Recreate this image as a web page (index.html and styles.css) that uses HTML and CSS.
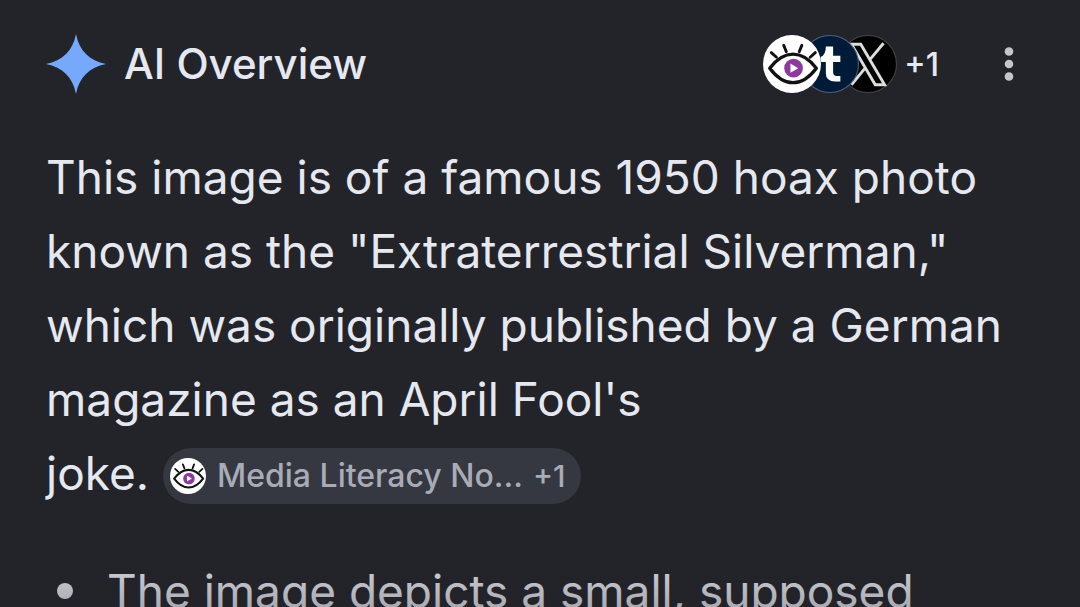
FILE: index.html
```html
<!DOCTYPE html>
<html lang="en">
<head>
<meta charset="utf-8">
<meta name="viewport" content="width=device-width, initial-scale=1">
<title>AI Overview</title>
<link rel="stylesheet" href="styles.css">
</head>
<body>
<svg class="defs" aria-hidden="true">
  <symbol id="eye" viewBox="0 0 56 56">
    <circle cx="28" cy="28" r="28" fill="#fff"/>
    <path d="M6.500 32Q17 18.500 29 18.500T51.500 32Q41 46 29 46T6.500 32Z" fill="#fff" stroke="#111" stroke-width="3.200" stroke-linejoin="round"/>
    <path d="M8 17l5 4.500M20 10l2.500 6M37.500 10l-2.500 6M50.500 17l-5 4.500" stroke="#111" stroke-width="2.800" stroke-linecap="round"/>
    <circle cx="29.500" cy="32" r="9" fill="#8e3a9d"/>
    <path d="M26.500 27.500v9l7.500-4.500z" fill="#fff"/>
  </symbol>
</svg>
<main class="overview">
  <header class="header">
    <svg class="spark" viewBox="0 0 58 58" aria-hidden="true"><path d="M29 0C32 16 42 26 58 29C42 32 32 42 29 58C26 42 16 32 0 29C16 26 26 16 29 0Z" fill="#76a9fb"/></svg>
    <h1 class="title">AI Overview</h1>
    <button class="sources" aria-label="Sources">
      <svg class="source source-eye" viewBox="0 0 56 56" aria-hidden="true"><use href="#eye"/></svg>
      <svg class="source source-t" viewBox="0 0 56 56" aria-hidden="true">
        <circle cx="28" cy="28" r="27.500" fill="#001b38" stroke="#4c6482"/>
        <path d="M24 11h7v9h7v6h-7v10q0 3.500 3.500 3.500H38v5.500h-5q-9 0-9-8V26h-5v-5q5-1.500 5-10Z" fill="#fff"/>
      </svg>
      <svg class="source source-x" viewBox="0 0 56 56" aria-hidden="true">
        <circle cx="28" cy="28" r="27.500" fill="#000" stroke="#44464c"/>
        <path d="M12 9h9l23 39h-9ZM43 8L30 23.500M26 31L12 48" fill="none" stroke="#ddd" stroke-width="2.800"/>
      </svg>
      <span class="more">+1</span>
    </button>
    <button class="menu" aria-label="More options"><svg class="dots" viewBox="0 0 10 36" aria-hidden="true"><circle cx="5" cy="5.500" r="4.300"/><circle cx="5" cy="18" r="4.300"/><circle cx="5" cy="30.500" r="4.300"/></svg></button>
  </header>
  <p class="text">This image is of a famous 1950 hoax photo<br>known as the "Extraterrestrial Silverman,"<br>which was originally published by a German<br>magazine as an April Fool's<br><span class="last">joke. <a class="chip" href="#source"><svg class="chip-icon" viewBox="0 0 56 56" aria-hidden="true"><use href="#eye"/></svg><span>Media Literacy No...</span><span class="chip-more">+1</span></a></span></p>
  <ul class="list"><li class="item">The image depicts a small, supposed</li></ul>
</main>
</body>
</html>
```
FILE: styles.css
```css
* { box-sizing: border-box; }
body {
  margin: 0;
  height: 100vh;
  overflow: hidden;
  background: #23242a;
  color: #e6e8f0;
  font-family: Inter, "Liberation Sans", sans-serif;
}
button { border: 0; padding: 0; background: none; color: inherit; font: inherit; }
.defs { position: absolute; width: 0; height: 0; }
.overview { position: relative; height: 100%; overflow: hidden; padding: 32px 54px 0 46px; }
.overview::after {
  content: "";
  position: absolute;
  inset: auto 0 0;
  height: 72px;
  background: linear-gradient(transparent, rgba(32, 31, 36, 0.3));
}
.header { display: flex; align-items: center; height: 64px; }
.spark { width: 60px; height: 60px; }
.title { margin: 0 auto 0 18px; font-size: 42px; line-height: 44px; font-weight: 500; }
.sources { display: flex; align-items: center; }
.source { position: relative; width: 58px; height: 58px; }
.source-eye { z-index: 2; }
.source-t { z-index: 1; margin-left: -20px; }
.source-x { margin-left: -20px; }
.more { margin-left: 7px; font-size: 32px; font-weight: 500; }
.menu { width: 34px; margin-left: 53px; }
.dots { display: block; width: 10px; height: 36px; margin: auto; fill: #c5c6c9; }
.text { margin: 44px 0 0; font-size: 46px; line-height: 74px; white-space: nowrap; }
.last { display: flex; align-items: center; gap: 14px; }
.chip {
  display: flex;
  align-items: center;
  height: 56px;
  margin-top: 6px;
  padding: 0 16px 0 7px;
  border-radius: 28px;
  background: #353840;
  color: #a9acb7;
  font-size: 32px;
  font-weight: 500;
  text-decoration: none;
}
.chip-icon { width: 36px; height: 36px; margin-right: 11px; }
.chip-more { margin-left: 10px; font-size: 30px; }
.list { margin: 44px 0 0; padding: 0; list-style: none; font-size: 46px; line-height: 74px; white-space: nowrap; }
.item { display: flex; align-items: center; gap: 34px; padding-left: 11px; }
.item::before { content: ""; width: 16px; height: 16px; border-radius: 50%; background: currentColor; }
```
